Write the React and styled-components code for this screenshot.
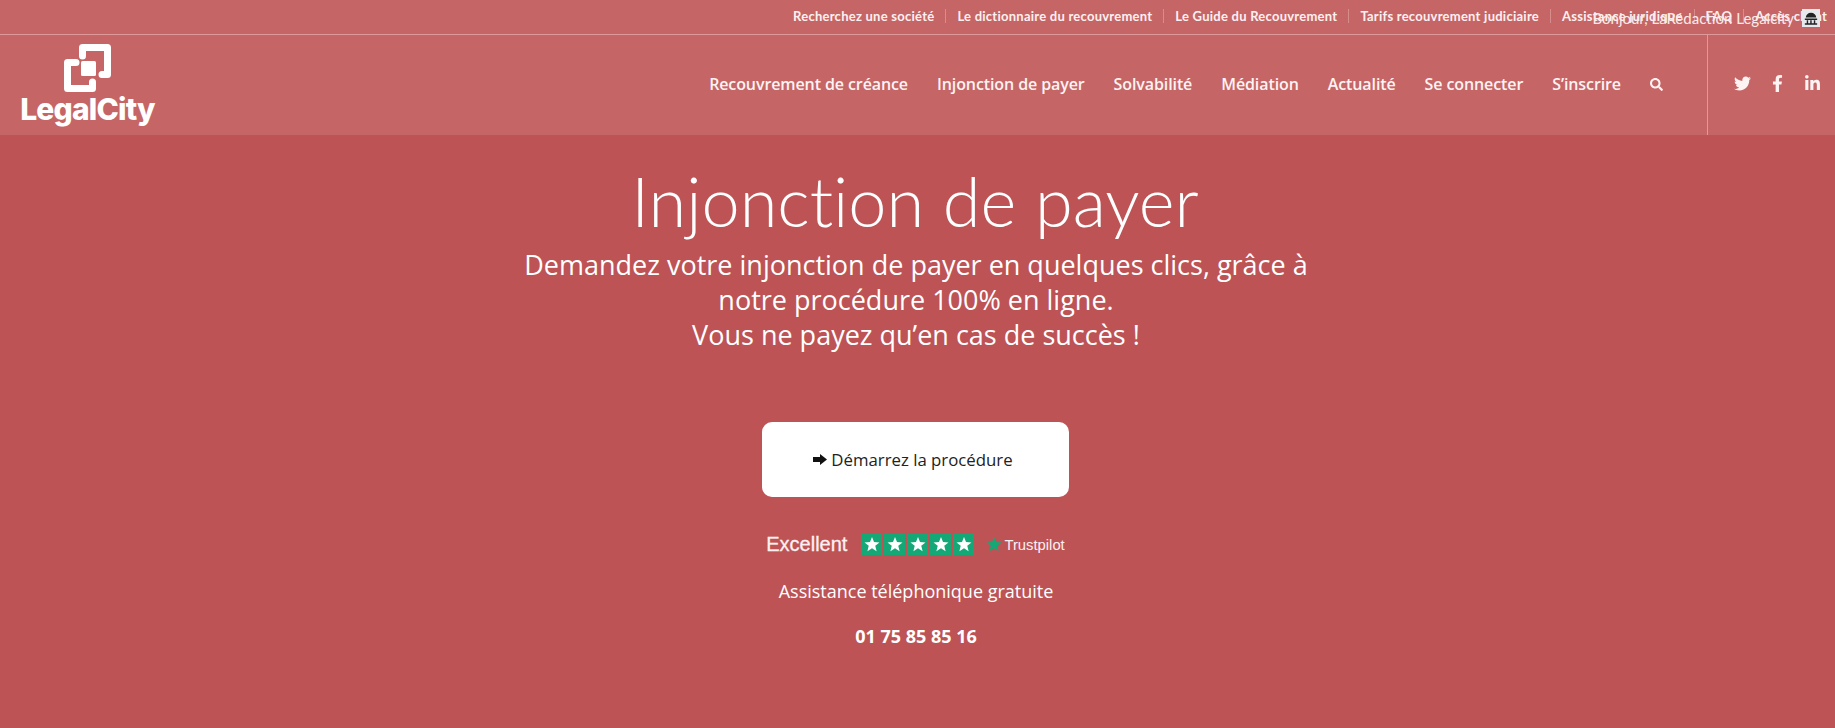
import React from "react";
import styled, { createGlobalStyle } from "styled-components";
import { FaTwitter, FaFacebookF, FaLinkedinIn, FaSearch } from "react-icons/fa";

const Global = createGlobalStyle`
  html, body { margin: 0; padding: 0; background: #bd5355; overflow: hidden; }
  * { box-sizing: border-box; }
`;
const Page = styled.div`
  width: 1835px; height: 728px; overflow: hidden; background: #bd5355; color: #fff;
  font-family: "Open Sans", sans-serif;
`;
const Header = styled.header`
  background: #c66566; height: 135px; display: flex; flex-direction: column;
`;
const TopBar = styled.div`
  position: relative; height: 35px; border-bottom: 1px solid #de9a9a;
  display: flex; justify-content: flex-end; align-items: center; padding: 0 0 2px 0;
`;
const TopItem = styled.a`
  font: 700 13px "Lato", sans-serif; letter-spacing: 0.25px; color: #fdf0f0; padding: 0 11px; line-height: 14px;
  white-space: nowrap;
  border-left: 1px solid ${p => (p.$first ? "transparent" : "#d98c8c")};
  &:last-of-type { padding-right: 8px; }
`;
const Greeting = styled.div`
  position: absolute; right: 41px; top: 9px; font: 400 15px "Lato", sans-serif; color: #fbeaea;
  white-space: nowrap;
`;
const Avatar = styled.svg`
  position: absolute; right: 15px; top: 9px; width: 18px; height: 18px;
`;
const MainBar = styled.div`
  flex: 1; display: flex; align-items: center; padding-left: 20px;
`;
const Logo = styled.div`
  display: flex; flex-direction: column; align-items: center; width: 135px; margin-top: -3px;
`;
const LogoText = styled.div`
  font: 800 30px/30px "Inter", sans-serif; letter-spacing: -0.8px; color: #fff; margin-top: 2px;
`;
const Nav = styled.nav`
  margin-left: auto; display: flex; align-items: center; gap: 29px; padding: 0 44px 2px 0;
  height: 100%;
`;
const NavItem = styled.a`
  font: 600 16px "Open Sans", sans-serif; letter-spacing: -0.1px; color: #fdf3f3; white-space: nowrap;
`;
const Social = styled.div`
  width: 128px; height: 100%; border-left: 1px solid #de9a9a; display: flex; align-items: center;
  justify-content: flex-start; gap: 18px; padding: 0 0 4px 26px; color: #fdf3f3; font-size: 17px;
`;
const Hero = styled.main`
  display: flex; flex-direction: column; align-items: center; padding-top: 34px; padding-right: 3px;
`;
const Title = styled.h1`
  margin: 0 2px 0 0; font: 300 68.500px/64px "Lato", sans-serif; font-variant-ligatures: none; color: #fff;
`;
const Sub = styled.p`
  margin: 14px 0 0; font: 400 27px/35px "Open Sans", sans-serif; text-align: center; color: #fff;
`;
const CTA = styled.a`
  margin: 70px 2px 0 0; width: 307px; height: 75px; background: #fff; border-radius: 10px;
  display: flex; align-items: center; justify-content: center; color: #222;
  font: 400 16.800px "Open Sans", sans-serif; gap: 4px; padding-right: 4px;
`;
const ArrowIcon = styled.svg`
  width: 14px; height: 11px; flex: none;
`;
const Rating = styled.div`
  margin-top: 35px; display: flex; align-items: center; height: 24px; margin-left: 1px;
`;
const Excellent = styled.span`
  font: 400 20px "Liberation Sans", sans-serif; -webkit-text-stroke: 0.3px #fdf0f0; color: #fdf0f0; margin: 0 14px 0 -2px;
`;
const Stars = styled.div`
  display: flex; gap: 2px; margin-right: 12px;
`;
const StarBox = styled.div`
  width: 21px; height: 21px; background: #14a877; display: flex; align-items: center; justify-content: center;
`;
const Pilot = styled.span`
  font: 400 14.800px "Liberation Sans", sans-serif; color: #fdf0f0; margin-left: 2px; margin-top: 1px;
`;
const Info = styled.p`
  margin: ${p => p.$mt}px 0 0; font: ${p => (p.$bold ? 700 : 400)} 18px/26px "Open Sans", sans-serif; color: #fff;
`;

const Star = ({ size, fill }) => (
  <svg width={size} height={size} viewBox="0 0 24 24"><path fill={fill} d="M12 1.500l3 7.600 8.200.5-6.300 5.200 2 8-6.900-4.400-6.900 4.400 2-8L.8 9.600l8.200-.5z" /></svg>
);

const tops = ["Recherchez une société", "Le dictionnaire du recouvrement", "Le Guide du Recouvrement", "Tarifs recouvrement judiciaire", "Assistance juridique", "FAQ", "Accès client"];
const navs = ["Recouvrement de créance", "Injonction de payer", "Solvabilité", "Médiation", "Actualité", "Se connecter", "S’inscrire"];

export default function App() {
  return (
    <Page>
      <Global />
      <Header>
        <TopBar>
          {tops.map((t, i) => <TopItem key={t} $first={i === 0}>{t}</TopItem>)}
          <Greeting>Bonjour, LaRédaction Legalcity</Greeting>
          <Avatar viewBox="0 0 19 19">
            <rect width="19" height="19" fill="#e6e8ec" />
            <path fill="#222" d="M4 9a5.500 5 0 0 1 11 0zM3 10h13v1.500H3zM5 12h1.500v3H5zM8.700 12h1.500v3H8.700zM12.500 12H14v3h-1.500zM3 15h13v1.500H3z" />
          </Avatar>
        </TopBar>
        <MainBar>
          <Logo>
            <svg width="47" height="48" viewBox="0 0 47 48">
              <g fill="none" stroke="#fff" strokeWidth="7" strokeLinejoin="round" strokeLinecap="round">
                <path d="M18.500 12V3.500H43.500V30.500H38" />
                <path d="M12 18.500H3.500V44.500H28.500V38" />
              </g>
              <rect x="17" y="17" width="15" height="15" rx="1.500" fill="#fff" />
            </svg>
            <LogoText>LegalCity</LogoText>
          </Logo>
          <Nav>
            {navs.map(n => <NavItem key={n}>{n}</NavItem>)}
            <FaSearch size={13} color="#fdf3f3" />
          </Nav>
          <Social>
            <FaTwitter />
            <FaFacebookF />
            <FaLinkedinIn />
          </Social>
        </MainBar>
      </Header>
      <Hero>
        <Title>Injonction de payer</Title>
        <Sub>Demandez votre injonction de payer en quelques clics, grâce à<br />notre procédure 100% en ligne.<br />Vous ne payez qu’en cas de succès !</Sub>
        <CTA>
          <ArrowIcon viewBox="0 0 14 11"><path fill="#111" d="M0 3h7V0l7 5.500L7 11V8H0z" /></ArrowIcon>
          <span>Démarrez la procédure</span>
        </CTA>
        <Rating>
          <Excellent>Excellent</Excellent>
          <Stars>{[0, 1, 2, 3, 4].map(i => <StarBox key={i}><Star size={16} fill="#fff" /></StarBox>)}</Stars>
          <Star size={16} fill="#14a877" />
          <Pilot>Trustpilot</Pilot>
        </Rating>
        <Info $mt={22}>Assistance téléphonique gratuite</Info>
        <Info $mt={19} $bold>01 75 85 85 16</Info>
      </Hero>
    </Page>
  );
}
